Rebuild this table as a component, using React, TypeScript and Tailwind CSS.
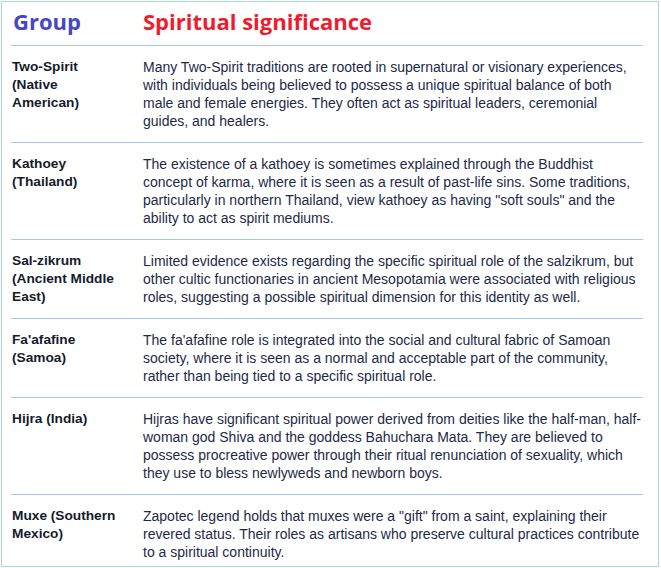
import React from "react";

const rows = [
  {
    group: "Two-Spirit (Native American)",
    text: "Many Two-Spirit traditions are rooted in supernatural or visionary experiences, with individuals being believed to possess a unique spiritual balance of both male and female energies. They often act as spiritual leaders, ceremonial guides, and healers.",
  },
  {
    group: "Kathoey (Thailand)",
    text: 'The existence of a kathoey is sometimes explained through the Buddhist concept of karma, where it is seen as a result of past-life sins. Some traditions, particularly in northern Thailand, view kathoey as having "soft souls" and the ability to act as spirit mediums.',
  },
  {
    group: "Sal-zikrum (Ancient Middle East)",
    text: "Limited evidence exists regarding the specific spiritual role of the salzikrum, but other cultic functionaries in ancient Mesopotamia were associated with religious roles, suggesting a possible spiritual dimension for this identity as well.",
  },
  {
    group: "Fa'afafine (Samoa)",
    text: "The fa'afafine role is integrated into the social and cultural fabric of Samoan society, where it is seen as a normal and acceptable part of the community, rather than being tied to a specific spiritual role.",
  },
  {
    group: "Hijra (India)",
    text: "Hijras have significant spiritual power derived from deities like the half-man, half-woman god Shiva and the goddess Bahuchara Mata. They are believed to possess procreative power through their ritual renunciation of sexuality, which they use to bless newlyweds and newborn boys.",
  },
  {
    group: "Muxe (Southern Mexico)",
    text: 'Zapotec legend holds that muxes were a "gift" from a saint, explaining their revered status. Their roles as artisans who preserve cultural practices contribute to a spiritual continuity.',
  },
];

export default function App() {
  return (
    <div className="w-[661px] h-[568px] bg-white p-px">
      <div className="h-[566px] w-[658px] border border-[#a9dae3] overflow-hidden pl-[9px] pr-[15px]">
        <div className="grid grid-cols-[132px_1fr] pt-[3px] pb-[8px] border-b border-[#a7c9ef] font-['Open_Sans',sans-serif] font-bold text-[22px] leading-[32px]">
          <div className="text-[#4747c6] pl-[2px]">Group</div>
          <div className="text-[#ee1c2e]">Spiritual significance</div>
        </div>
        {rows.map((r) => (
          <div
            key={r.group}
            className="grid grid-cols-[132px_1fr] py-3 border-b border-[#a7c9ef] font-['Liberation_Sans',Arial,sans-serif] text-[14px] leading-[18px]"
          >
            <div className="font-bold text-[13.7px] text-[#141b2b] pl-[1px] pr-[21px]">{r.group}</div>
            <div className="text-[#1c2a47]">{r.text}</div>
          </div>
        ))}
      </div>
    </div>
  );
}
